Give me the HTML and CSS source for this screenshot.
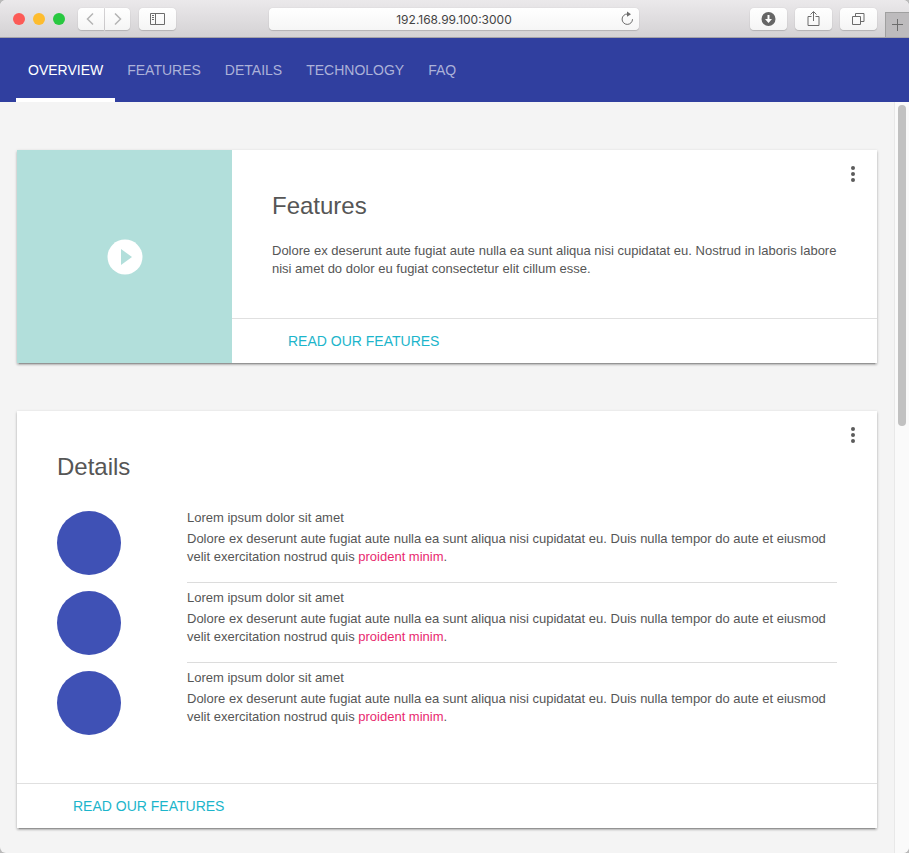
FILE: index.html
```
<!DOCTYPE html>
<html lang="en">
<head>
<meta charset="utf-8">
<meta name="viewport" content="width=device-width, initial-scale=1">
<title>Overview</title>
<link rel="stylesheet" href="styles.css">
</head>
<body>
<div class="window">
  <div class="toolbar">
    <div class="lights"><span class="light red"></span><span class="light yellow"></span><span class="light green"></span></div>
    <div class="history">
      <button class="tool nav" type="button" aria-label="Back"><svg width="26" height="22" viewBox="0 0 26 22"><path d="M15 5.500l-5.500 5.500 5.500 5.500" stroke="#b4b4b4" stroke-width="1.500"/></svg></button>
      <button class="tool nav" type="button" aria-label="Forward"><svg width="25" height="22" viewBox="0 0 25 22"><path d="M10 5.500l5.500 5.500-5.500 5.500" stroke="#b4b4b4" stroke-width="1.500"/></svg></button>
    </div>
    <button class="tool" type="button" aria-label="Sidebar"><svg width="37" height="22" viewBox="0 0 37 22"><path d="M11.500 5.500h14v11h-14zM16.500 5.500v11M13 7.500h2M13 9.500h2M13 11.500h2"/></svg></button>
    <div class="address">
      <input type="text" aria-label="Address" value="192.168.99.100:3000">
      <button class="reload" type="button" aria-label="Reload"><svg width="16" height="18" viewBox="0 0 16 18"><path d="M8.500 4a5.200 5.200 0 1 0 5 5.200"/><path d="M8 1.500l4 2.700-4 2.600z" fill="#6c6c6c" stroke="none"/></svg></button>
    </div>
    <div class="actions">
      <button class="tool" type="button" aria-label="Downloads"><svg width="37" height="22" viewBox="0 0 37 22"><circle cx="18.500" cy="11" r="7" fill="#666" stroke="none"/><path d="M17.500 7h2v4h2.500l-3.500 4-3.500-4h2.500z" fill="#fff" stroke="none"/></svg></button>
      <button class="tool" type="button" aria-label="Share"><svg width="37" height="22" viewBox="0 0 37 22"><path d="M16.500 8.500h-3.500v9h11v-9h-3.500M18.500 13v-9M15.500 6.500l3-3 3 3"/></svg></button>
      <button class="tool" type="button" aria-label="Tabs"><svg width="37" height="22" viewBox="0 0 37 22"><path d="M12.500 8.500h8v8h-8zM15.500 8v-2.500h8.500v8h-3"/></svg></button>
    </div>
    <button class="new-tab" type="button" aria-label="New tab"><svg width="23" height="24" viewBox="0 0 23 24"><path d="M11.500 6v12M6 11.500h11"/></svg></button>
  </div>

  <nav class="tabs">
    <a class="tab active" href="#overview">OVERVIEW</a>
    <a class="tab" href="#features">FEATURES</a>
    <a class="tab" href="#details">DETAILS</a>
    <a class="tab" href="#technology">TECHNOLOGY</a>
    <a class="tab" href="#faq">FAQ</a>
  </nav>

  <div class="viewport">
    <main class="page" id="overview">
      <section class="card split" id="features">
        <div class="media">
          <button class="play" type="button" aria-label="Play"><svg width="36" height="36" viewBox="0 0 36 36" stroke="none"><circle cx="18" cy="18" r="17.500" fill="#fff"/><path d="M14 10v16l11-8z" fill="#b2dfdb"/></svg></button>
        </div>
        <div class="card-main">
          <div class="card-body">
            <h2>Features</h2>
            <p>Dolore ex deserunt aute fugiat aute nulla ea sunt aliqua nisi cupidatat eu. Nostrud in laboris labore nisi amet do dolor eu fugiat consectetur elit cillum esse.</p>
          </div>
          <div class="card-actions"><a href="#features">READ OUR FEATURES</a></div>
        </div>
        <button class="more" type="button" aria-label="More"><span></span><span></span><span></span></button>
      </section>

      <section class="card" id="details">
        <div class="card-body">
          <h2>Details</h2>
          <div class="items">
            <div class="item">
              <div class="avatar"></div>
              <div class="item-text"><h3>Lorem ipsum dolor sit amet</h3><p>Dolore ex deserunt aute fugiat aute nulla ea sunt aliqua nisi cupidatat eu. Duis nulla tempor do aute et eiusmod velit exercitation nostrud quis <a href="#details">proident minim</a>.</p></div>
            </div>
            <div class="item">
              <div class="avatar"></div>
              <div class="item-text"><h3>Lorem ipsum dolor sit amet</h3><p>Dolore ex deserunt aute fugiat aute nulla ea sunt aliqua nisi cupidatat eu. Duis nulla tempor do aute et eiusmod velit exercitation nostrud quis <a href="#details">proident minim</a>.</p></div>
            </div>
            <div class="item">
              <div class="avatar"></div>
              <div class="item-text"><h3>Lorem ipsum dolor sit amet</h3><p>Dolore ex deserunt aute fugiat aute nulla ea sunt aliqua nisi cupidatat eu. Duis nulla tempor do aute et eiusmod velit exercitation nostrud quis <a href="#details">proident minim</a>.</p></div>
            </div>
          </div>
        </div>
        <div class="card-actions"><a href="#features">READ OUR FEATURES</a></div>
        <button class="more" type="button" aria-label="More"><span></span><span></span><span></span></button>
      </section>
    </main>
    <div class="scroll-track"><div class="scroll-thumb"></div></div>
  </div>
</div>
</body>
</html>
```
FILE: styles.css
```
* { box-sizing: border-box; }

body {
  margin: 0;
  background: #b9b9b9;
  color: #565656;
  font: 13px/18px "Liberation Sans", Arial, sans-serif;
}

h2, h3, p { margin: 0; font-weight: 400; }
a { text-decoration: none; }
button { padding: 0; border: 0; background: none; }
svg { display: block; fill: none; stroke: #6c6c6c; stroke-width: 1; }

.window {
  display: flex;
  flex-direction: column;
  min-height: 100vh;
  overflow: hidden;
  border-radius: 6px;
  background: #f4f4f4;
}

/* Browser toolbar */
.toolbar {
  display: flex;
  align-items: center;
  height: 38px;
  padding-left: 13px;
  border-bottom: 1px solid #a5a3a8;
  background: linear-gradient(#ebe9eb, #d4d2d4);
}
.lights { display: flex; gap: 8px; margin-right: 13px; }
.light { width: 12px; height: 12px; border-radius: 50%; }
.red { background: #fc5b57; }
.yellow { background: #fdbc2e; }
.green { background: #28c840; }

.tool {
  border-radius: 4px;
  background: linear-gradient(#fff, #f5f5f5);
  box-shadow: 0 0 1px rgba(0, 0, 0, .2), 0 1px 1px rgba(0, 0, 0, .15);
}
.history { display: flex; gap: 1px; margin-right: 9px; }
.nav:first-child { border-radius: 4px 0 0 4px; }
.nav:last-child { border-radius: 0 4px 4px 0; }

.address {
  display: flex;
  flex: 1;
  align-items: center;
  height: 22px;
  margin: 0 111px 0 93px;
  padding-right: 4px;
  border-radius: 4px;
  background: linear-gradient(#fff, #f6f6f6);
  box-shadow: 0 0 1px rgba(0, 0, 0, .2), 0 1px 1px rgba(0, 0, 0, .15);
}
.address input {
  flex: 1;
  min-width: 0;
  padding: 2px 0 0 20px;
  border: 0;
  background: none;
  color: #444;
  font: 12px/20px Inter, sans-serif;
  text-align: center;
}
.actions { display: flex; gap: 8px; margin-right: 8px; }
.new-tab {
  align-self: flex-end;
  border: solid #a0a0a0;
  border-width: 1px 0 0 1px;
  background: #bdbbbd;
}

/* Page tabs */
.tabs {
  display: flex;
  height: 64px;
  padding: 0 16px;
  background: #303f9f;
}
.tab {
  padding: 0 12px;
  border-bottom: 4px solid transparent;
  color: #acb2d9;
  font-size: 14px;
  line-height: 64px;
}
.tab.active { border-color: #fff; color: #fff; }

/* Page content */
.viewport { display: flex; flex: 1; }
.page {
  display: flex;
  flex: 1;
  flex-direction: column;
  gap: 48px;
  padding: 48px 17px 24px;
}
.scroll-track {
  width: 15px;
  padding: 3px;
  border-left: 1px solid #e8e8e8;
  background: #fafafa;
}
.scroll-thumb { width: 8px; height: 321px; border-radius: 4px; background: #c1c1c1; }

.card {
  position: relative;
  background: #fff;
  box-shadow: 0 2px 2px rgba(0, 0, 0, .14), 0 3px 1px -2px rgba(0, 0, 0, .2), 0 1px 3px rgba(0, 0, 0, .2);
}
.split { display: grid; grid-template-columns: 1fr 3fr; }
.media {
  display: flex;
  align-items: center;
  justify-content: center;
  background: #b2dfdb;
}
.play svg { stroke: none; }
.card-body { padding: 40px; }
.card-body h2 {
  margin-bottom: 20px;
  font-size: 24px;
  line-height: 32px;
}
.card-actions {
  padding: 0 56px;
  border-top: 1px solid #e0e0e0;
  font-size: 14px;
  line-height: 44px;
}
.card-actions a { color: #1cb5cb; }

.more {
  position: absolute;
  top: 16px;
  right: 16px;
  display: flex;
  flex-direction: column;
  align-items: center;
  gap: 2px;
  width: 16px;
}
.more span { width: 4px; height: 4px; border-radius: 50%; background: #5c5c5c; }

.item {
  display: grid;
  grid-template-columns: 1fr 5fr;
  min-height: 80px;
}
.avatar {
  width: 64px;
  height: 64px;
  margin-top: 8px;
  border-radius: 50%;
  background: #3f51b5;
}
.item-text { padding-top: 5px; border-bottom: 1px solid #dcdcdc; }
.item:last-child .item-text { border-bottom-color: transparent; }
.item-text h3 { margin-bottom: 2px; font-size: 13px; line-height: 20px; }
.item-text a { color: #e8296f; }
```
